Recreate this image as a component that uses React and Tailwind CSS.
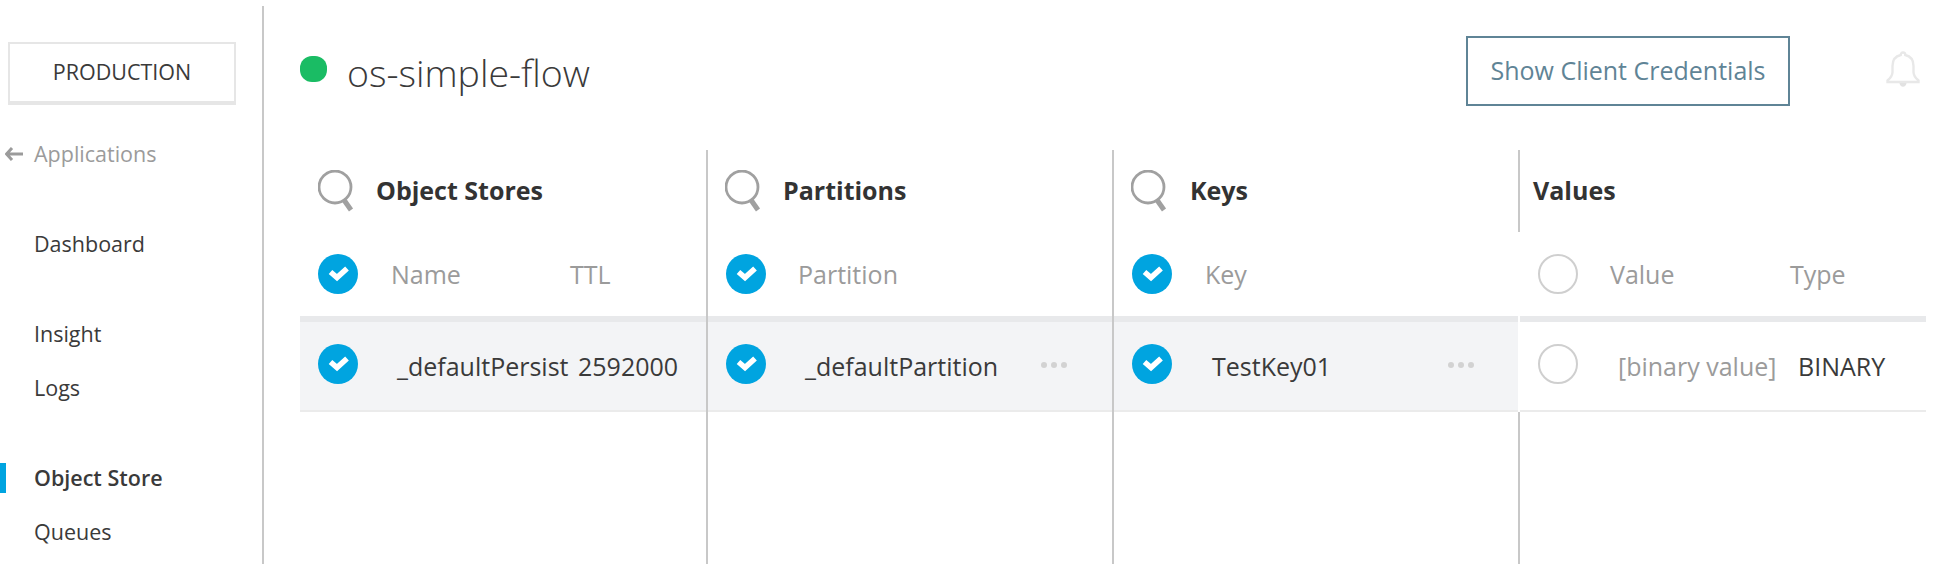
const font = { fontFamily: '"Open Sans", sans-serif' };

function Check({ on = true }) {
  if (!on) return <span className="block w-[40px] h-[40px] rounded-full border-2 border-[#cfcfcf] bg-white shrink-0" />;
  return (
    <svg width="40" height="40" viewBox="0 0 40 40" className="block shrink-0">
      <circle cx="20" cy="20" r="20" fill="#00a4e0" />
      <path d="M12.500 18 L19 23.500 L29 14.500" fill="none" stroke="#fff" strokeWidth="5.500" />
    </svg>
  );
}

function Search() {
  return (
    <svg width="36" height="42" viewBox="0 0 36 42" className="block shrink-0">
      <circle cx="17" cy="17" r="16" fill="none" stroke="#a0a0a0" strokeWidth="2.800" />
      <path d="M26 30 L33 40" fill="none" stroke="#a0a0a0" strokeWidth="5" />
    </svg>
  );
}

function Dots() {
  return (
    <span className="flex gap-[4px]">
      <span className="w-[6px] h-[6px] rounded-full bg-[#d2d2d2]" />
      <span className="w-[6px] h-[6px] rounded-full bg-[#d2d2d2]" />
      <span className="w-[6px] h-[6px] rounded-full bg-[#d2d2d2]" />
    </span>
  );
}

function Nav({ children, className = "" }) {
  return <div className={"text-[21.500px] leading-[30px] text-[#3a3a3a] pl-[34px] " + className}>{children}</div>;
}

export default function App() {
  return (
    <div className="flex h-[564px] w-[1954px] overflow-hidden bg-white" style={font}>
      <aside className="w-[264px] shrink-0 mt-[6px] border-r-2 border-[#c8c8c8] relative">
        <div className="ml-[8px] mt-[36px] w-[228px] h-[63px] border-2 border-b-4 border-[#e6e6e6] flex items-center justify-center text-[21.500px] text-[#3a3a3a] pb-[1px]">PRODUCTION</div>
        <div className="flex items-center mt-[34px] text-[21.500px] leading-[30px] text-[#9b9b9b]">
          <svg width="18" height="14" viewBox="0 0 18 14" className="ml-[5px] mr-[11px]">
            <path d="M7 1 L1.500 7 L7 13 M2 7 H18" fill="none" stroke="#9b9b9b" strokeWidth="3" />
          </svg>
          Applications
        </div>
        <Nav className="mt-[60px]">Dashboard</Nav>
        <Nav className="mt-[60px]">Insight</Nav>
        <Nav className="mt-[24px]">Logs</Nav>
        <Nav className="mt-[60px] font-semibold relative">
          <span className="absolute left-0 top-0 w-[6px] h-[30px] bg-[#00a4e0]" />
          Object Store
        </Nav>
        <Nav className="mt-[24px]">Queues</Nav>
      </aside>

      <main className="flex-1 pl-[36px]">
        <header className="h-[150px] flex items-start">
          <span className="mt-[56px] w-[27px] h-[26px] rounded-[12px] bg-[#1abc64]" />
          <h1 className="ml-[20px] mt-[46px] text-[37.500px] leading-[54px] text-[#3a3a3a] font-light w-[1119px]">os-simple-flow</h1>
          <button className="mt-[36px] w-[324px] h-[70px] border-2 border-[#5f8496] text-[25px] text-[#5f8496]">Show Client Credentials</button>
          <svg width="34" height="37" viewBox="0 0 34 37" className="ml-[96px] mt-[51px]">
            <path d="M17 1.500c-1.500 0-2.300 1-2.300 2.500C9 5.300 6.500 9.500 6.500 15v6c0 3-2 6-5 8.500V31h31v-1.500c-3-2.500-5-5.500-5-8.500v-6c0-5.500-2.500-9.700-8.200-11C19.300 2.500 18.500 1.500 17 1.500z" fill="none" stroke="#e8e8e8" strokeWidth="2.400" />
            <path d="M13.500 32c.4 2.500 1.700 3.800 3.500 3.800s3.100-1.300 3.500-3.800z" fill="#e2e2e2" />
          </svg>
        </header>

        <div className="flex h-[414px]">
          {/* Object Stores */}
          <section className="w-[406px] flex flex-col shrink-0">
            <div className="h-[82px] flex items-center pl-[18px]">
              <Search /><span className="ml-[22px] text-[25px] font-bold text-[#333]">Object Stores</span>
            </div>
            <div className="h-[84px] pt-[22px] flex items-start pl-[18px] text-[25px] leading-[40px] text-[#9b9b9b]">
              <Check /><span className="ml-[33px] w-[179px]">Name</span><span>TTL</span>
            </div>
            <div className="h-[96px] border-t-[6px] border-b-2 border-t-[#e8e9eb] border-b-[#ebebeb] bg-[#f3f4f6] pt-[22px] flex items-start pl-[18px] text-[25px] leading-[44px] text-[#3a3a3a]">
              <Check /><span className="ml-[39px] w-[181px]">_defaultPersist</span><span>2592000</span>
            </div>
          </section>
          {/* Partitions */}
          <section className="w-[406px] flex flex-col shrink-0 border-l-2 border-[#c8c8c8]">
            <div className="h-[82px] flex items-center pl-[17px]">
              <Search /><span className="ml-[22px] text-[25px] font-bold text-[#333]">Partitions</span>
            </div>
            <div className="h-[84px] pt-[22px] flex items-start pl-[18px] text-[25px] leading-[40px] text-[#9b9b9b]">
              <Check /><span className="ml-[32px]">Partition</span>
            </div>
            <div className="h-[96px] border-t-[6px] border-b-2 border-t-[#e8e9eb] border-b-[#ebebeb] bg-[#f3f4f6] pt-[22px] flex items-start pl-[18px] text-[25px] leading-[44px] text-[#3a3a3a]">
              <Check /><span className="ml-[39px] w-[236px]">_defaultPartition</span><span className="mt-[18px]"><Dots /></span>
            </div>
          </section>
          {/* Keys */}
          <section className="w-[406px] flex flex-col shrink-0 border-l-2 border-[#c8c8c8]">
            <div className="h-[82px] flex items-center pl-[17px]">
              <Search /><span className="ml-[23px] text-[25px] font-bold text-[#333]">Keys</span>
            </div>
            <div className="h-[84px] pt-[22px] flex items-start pl-[18px] text-[25px] leading-[40px] text-[#9b9b9b]">
              <Check /><span className="ml-[33px]">Key</span>
            </div>
            <div className="h-[96px] border-t-[6px] border-b-2 border-t-[#e8e9eb] border-b-[#ebebeb] bg-[#f3f4f6] pt-[22px] flex items-start pl-[18px] text-[25px] leading-[44px] text-[#3a3a3a]">
              <Check /><span className="ml-[40px] w-[236px]">TestKey01</span><span className="mt-[18px]"><Dots /></span>
            </div>
          </section>
          {/* Values */}
          <section className="w-[408px] flex flex-col shrink-0">
            <div className="h-[82px] flex items-center pl-[13px] border-l-2 border-[#c8c8c8]">
              <span className="text-[25px] font-bold text-[#333]">Values</span>
            </div>
            <div className="h-[84px] pt-[22px] flex items-start pl-[20px] text-[25px] leading-[40px] text-[#9b9b9b]">
              <Check on={false} /><span className="ml-[32px] w-[180px]">Value</span><span>Type</span>
            </div>
            <div className="h-[96px] ml-[2px] border-t-[6px] border-b-2 border-t-[#e8e9eb] border-b-[#ebebeb] pt-[22px] flex items-start pl-[18px] text-[25px] leading-[44px] text-[#3a3a3a]">
              <Check on={false} /><span className="ml-[40px] w-[180px] text-[#9b9b9b]">[binary value]</span><span>BINARY</span>
            </div>
            <div className="flex-1 border-l-2 border-[#c8c8c8]" />
          </section>
        </div>
      </main>
    </div>
  );
}
